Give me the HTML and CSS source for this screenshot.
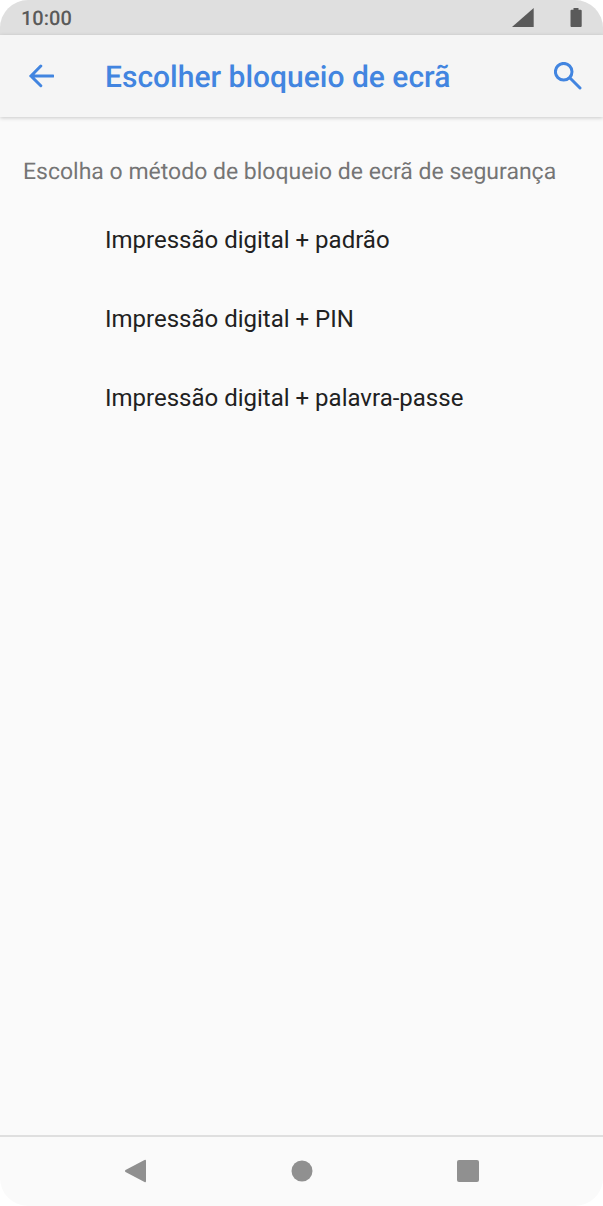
FILE: index.html
```html
<!DOCTYPE html>
<html lang="pt">
<head>
    <meta charset="UTF-8">
    <meta name="viewport" content="width=device-width, initial-scale=1.0">
    <title>Escolher bloqueio de ecrã</title>
    <link rel="stylesheet" href="styles.css">
</head>
<body>
    <div class="phone">
        <div class="status-bar">
            <span class="clock">10:00</span>
            <div class="status-icons">
                <svg width="22" height="20" viewBox="0 0 22 20"><path d="M21.7 0v19H0z"/></svg>
                <svg width="12" height="20" viewBox="0 0 12 20"><path d="M3.5 0h5v1.7h2.2q1 0 1 1V18q0 1-1 1H1.5q-1 0-1-1V2.700q0-1 1-1h2z"/></svg>
            </div>
        </div>

        <header class="app-bar">
            <button class="icon-button" type="button" aria-label="Voltar">
                <svg width="26" height="24" viewBox="0 0 26 24"><path d="M12.800 2L3 12l9.800 9.700M3 12h22"/></svg>
            </button>
            <h1>Escolher bloqueio de ecrã</h1>
            <button class="icon-button" type="button" aria-label="Pesquisar">
                <svg width="28" height="28" viewBox="0 0 28 28"><circle cx="9.700" cy="9.700" r="8.300"/><path d="M16 16l10 10"/></svg>
            </button>
        </header>

        <main class="content">
            <h2>Escolha o método de bloqueio de ecrã de segurança</h2>
            <ul class="options">
                <li><button type="button">Impressão digital + padrão</button></li>
                <li><button type="button">Impressão digital + PIN</button></li>
                <li><button type="button">Impressão digital + palavra-passe</button></li>
            </ul>
        </main>

        <nav class="nav-bar">
            <button type="button" aria-label="Anterior">
                <svg width="24" height="26" viewBox="0 0 24 26"><path d="M20.500 2Q22 1.200 22 3v20q0 1.800-1.500 1L1.500 14q-1.400-1 0-2z"/></svg>
            </button>
            <button type="button" aria-label="Início">
                <svg width="24" height="26" viewBox="0 0 24 26"><circle cx="12" cy="13" r="10.500"/></svg>
            </button>
            <button type="button" aria-label="Recentes">
                <svg width="24" height="26" viewBox="0 0 24 26"><rect x="1" y="2" width="22" height="22" rx="2"/></svg>
            </button>
        </nav>
    </div>
</body>
</html>
```
FILE: styles.css
```css
body {
    margin: 0;
    background-color: #ffffff;
    font-family: Roboto, 'Liberation Sans', sans-serif;
    text-rendering: geometricPrecision;
}

button {
    padding: 0;
    border: none;
    background: none;
    font: inherit;
    color: inherit;
    cursor: pointer;
}

svg {
    display: block;
}

.phone {
    display: flex;
    flex-direction: column;
    min-height: 100vh;
    border-radius: 28px;
    overflow: hidden;
    background-color: #fafafa;
}

.status-bar {
    display: flex;
    justify-content: space-between;
    align-items: center;
    height: 35px;
    padding: 0 21px;
    background-color: #dfdfdf;
    color: #5a5a5a;
    font-size: 20px;
    font-weight: 500;
}

.status-icons {
    display: flex;
    gap: 36px;
    fill: #5a5a5a;
}

.app-bar {
    display: flex;
    align-items: center;
    height: 82px;
    padding: 0 21px 0 28px;
    background-color: #f5f5f5;
    box-shadow: 0 1px 4px rgba(0, 0, 0, 0.2);
    color: #4285e0;
}

.app-bar h1 {
    flex: 1;
    margin: 0 0 0 51px;
    padding-top: 3px;
    font-size: 30px;
    font-weight: 500;
}

.icon-button svg {
    fill: none;
    stroke: currentColor;
    stroke-width: 3;
    stroke-linecap: round;
}

.content {
    flex: 1;
    padding-top: 34px;
}

.content h2 {
    margin: 0;
    padding: 0 23px;
    color: #757575;
    font-size: 23px;
    font-weight: 400;
    line-height: 42px;
}

.options {
    margin: 7px 0 0;
    padding: 0;
    list-style: none;
}

.options button {
    width: 100%;
    height: 79px;
    padding: 0 23px 0 105px;
    color: #212121;
    font-size: 24px;
    text-align: left;
}

.nav-bar {
    display: flex;
    justify-content: center;
    gap: 142px;
    padding: 21px 0 22px;
    border-top: 2px solid #dfdfdf;
    fill: #909090;
}
```
